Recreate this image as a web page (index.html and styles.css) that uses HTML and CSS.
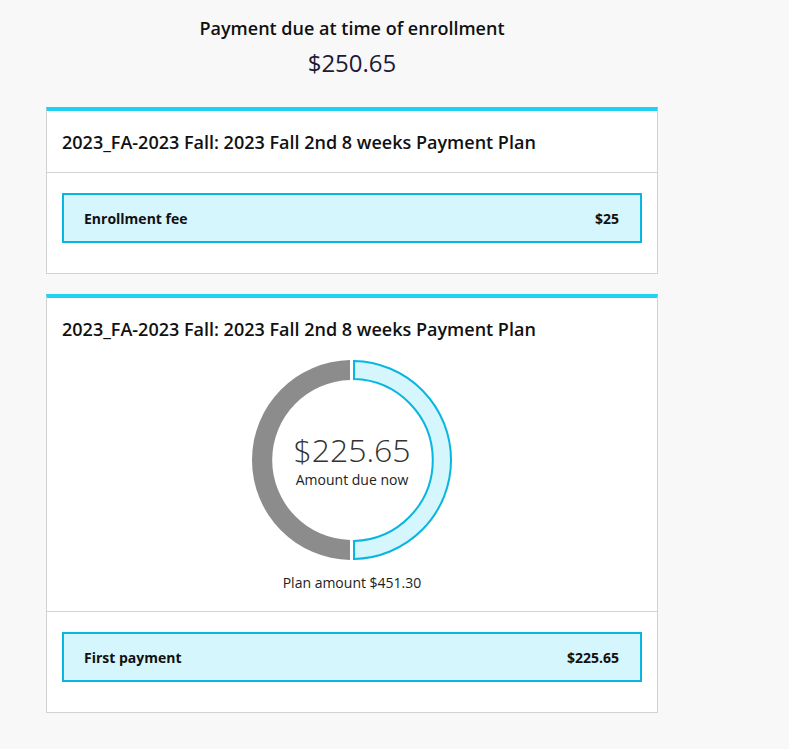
FILE: index.html
```html
<!DOCTYPE html>
<html lang="en">
<head>
<meta charset="utf-8">
<title>Payment due</title>
<link rel="stylesheet" href="styles.css">
</head>
<body>
<div class="page">
  <div class="summary">
    <div class="summary-title">Payment due at time of enrollment</div>
    <div class="summary-amount">$250.65</div>
  </div>

  <section class="card">
    <div class="card-header divided">
      <h2 class="card-title">2023_FA-2023 Fall: 2023 Fall 2nd 8 weeks Payment Plan</h2>
    </div>
    <div class="card-body">
      <div class="line-item">
        <span>Enrollment fee</span>
        <span>$25</span>
      </div>
    </div>
  </section>

  <section class="card">
    <div class="card-header">
      <h2 class="card-title">2023_FA-2023 Fall: 2023 Fall 2nd 8 weeks Payment Plan</h2>
    </div>
    <div class="chart-area">
      <div class="donut">
        <svg class="donut-svg" width="202" height="202" viewBox="0 0 202 202">
          <path d="M 99 1.02 A 100 100 0 0 0 99 200.98 L 99 180.97 A 80 80 0 0 1 99 21.03 Z" fill="#8c8c8c"/>
          <path d="M 103 2.02 A 99 99 0 0 1 103 199.98 L 103 181.97 A 81 81 0 0 0 103 20.03 Z" fill="#d6f6fd" stroke="#08b6df" stroke-width="2" stroke-linejoin="miter"/>
        </svg>
        <div class="donut-center">
          <div class="donut-amount">$225.65</div>
          <div class="donut-label">Amount due now</div>
        </div>
      </div>
      <div class="plan-amount">Plan amount $451.30</div>
    </div>
    <div class="card-body bordered">
      <div class="line-item">
        <span>First payment</span>
        <span>$225.65</span>
      </div>
    </div>
  </section>
</div>
</body>
</html>
```
FILE: styles.css
```css
* { box-sizing: border-box; }
html, body {
  margin: 0;
  padding: 0;
  background: #f8f8f8;
  font-family: "Open Sans", "Noto Sans", sans-serif;
  color: #1a1a1a;
}
.page {
  width: 612px;
  margin-left: 46px;
  padding-top: 16px;
}
.summary {
  text-align: center;
  margin-bottom: 29px;
}
.summary-title {
  font-size: 18px;
  line-height: 24px;
  font-weight: 600;
  color: #111;
}
.summary-amount {
  font-size: 24px;
  line-height: 30px;
  margin-top: 8px;
  color: #1b1b3a;
}
.card {
  background: #fff;
  border: 1px solid #d2d2d2;
  border-top: 4px solid #1fd2f4;
  margin-bottom: 20px;
}
.card-header {
  padding: 19px 15px 18px;
}
.card-header.divided {
  border-bottom: 1px solid #d2d2d2;
}
.card-title {
  margin: 0;
  font-size: 18px;
  line-height: 24px;
  font-weight: 600;
  color: #111;
}
.card-body {
  padding: 20px 15px 30px;
}
.card-body.bordered {
  border-top: 1px solid #d2d2d2;
}
.line-item {
  display: flex;
  justify-content: space-between;
  align-items: center;
  height: 50px;
  padding: 0 21px 0 20px;
  background: #d6f6fd;
  border: 2px solid #08b6df;
  font-size: 14px;
  font-weight: 700;
  color: #111;
}
.chart-area {
  display: flex;
  flex-direction: column;
  align-items: center;
  padding: 0 0 18px;
}
.donut {
  display: grid;
  width: 202px;
  height: 202px;
}
.donut-svg, .donut-center {
  grid-area: 1 / 1;
}
.donut-svg { display: block; }
.donut-center {
  display: flex;
  flex-direction: column;
  align-items: center;
  justify-content: center;
  padding-bottom: 1px;
}
.donut-amount {
  font-size: 32px;
  line-height: 38px;
  font-weight: 300;
  color: #333;
}
.donut-label {
  font-size: 14px;
  line-height: 18px;
  color: #222;
  margin-top: 2px;
}
.plan-amount {
  margin-top: 12px;
  font-size: 14px;
  line-height: 20px;
  color: #222;
}
```
